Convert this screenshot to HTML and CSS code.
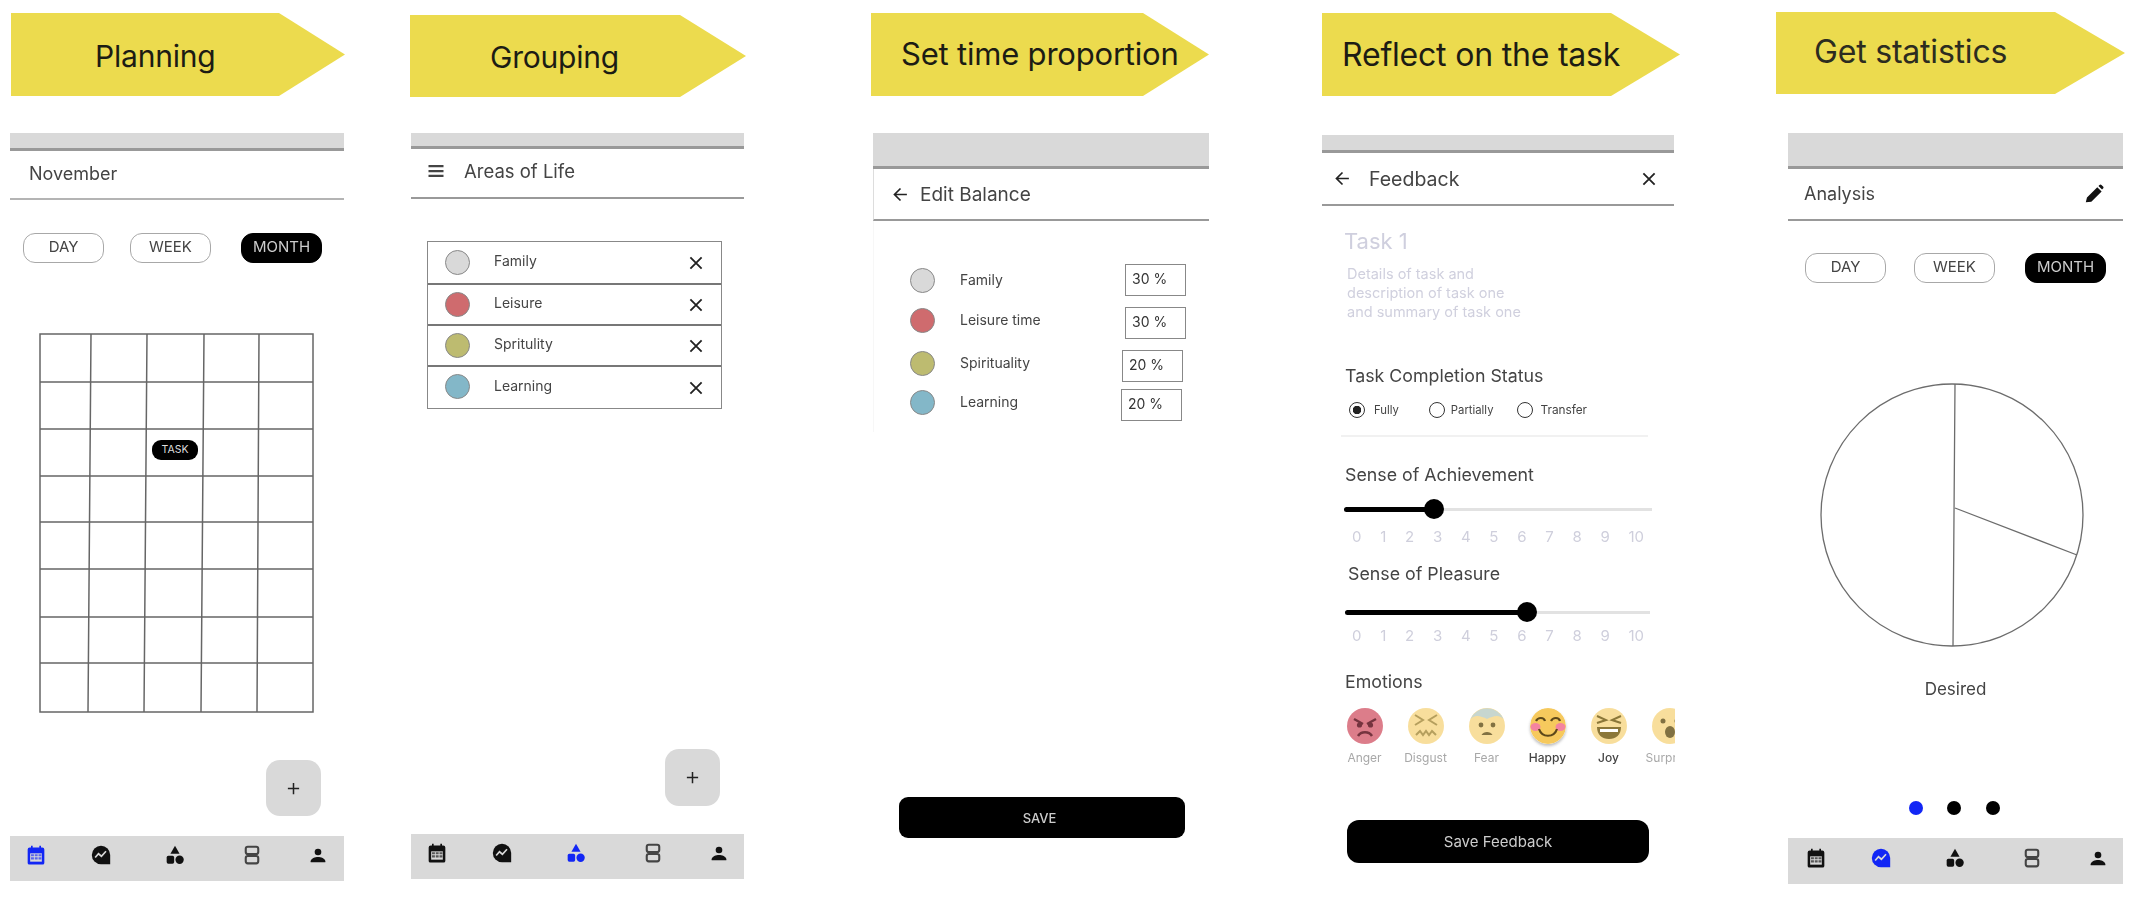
FILE: index.html
```html
<!DOCTYPE html>
<html lang="en">
<head>
<meta charset="utf-8">
<title>Task flow wireframes</title>
<link rel="stylesheet" href="styles.css">
</head>
<body>
<svg class="defs" width="0" height="0" aria-hidden="true">
  <symbol id="i-cal" viewBox="0 0 24 24"><path d="M6 1h2v2h8V1h2v2h1.500A2.500 2.500 0 0 1 22 5.500v16a2 2 0 0 1-2 2H4a2 2 0 0 1-2-2v-16A2.500 2.500 0 0 1 4.500 3H6z"/><path class="cut" d="M5 10h14v10H5z"/><path d="M6 11h3.500v2.500H6zM10.500 11H14v2.500h-3.500zM15 11h3.500v2.500H15zM6 14.800h3.500v2.500H6zM10.500 14.800H14v2.500h-3.500zM15 14.800h3.500v2.500H15z" opacity=".65"/></symbol>
  <symbol id="i-insight" viewBox="0 0 24 24"><path d="M12 1a11 11 0 1 0 0 22h11V12A11 11 0 0 0 12 1z"/><path class="zig" d="M5 15l4-4.500 3.500 3 5.500-6"/></symbol>
  <symbol id="i-shapes" viewBox="0 0 24 24"><path d="M12 1l5.500 9.500h-11z"/><rect x="2" y="13" width="9" height="9.500" rx="2"/><circle cx="17.500" cy="17.700" r="5"/></symbol>
  <symbol id="i-agenda" viewBox="0 0 24 24"><rect class="ring" x="4.500" y="2" width="15" height="8.800" rx="2.500"/><rect class="ring" x="4.500" y="13.200" width="15" height="8.800" rx="2.500"/></symbol>
  <symbol id="i-person" viewBox="-3 -3 30 30"><circle cx="12" cy="7.500" r="5"/><path d="M1 21.500c0-4.500 7-6.500 11-6.500s11 2 11 6.500v1.500H1z"/></symbol>
  <symbol id="i-x" viewBox="0 0 24 24"><path class="line" d="M4.500 4.500l15 15M19.500 4.500l-15 15"/></symbol>
  <symbol id="i-back" viewBox="0 0 24 24"><path class="line" d="M21 12H4M12 3.500L3.500 12l8.500 8.500"/></symbol>
  <symbol id="i-plus" viewBox="0 0 24 24"><path class="line" d="M12 3v18M3 12h18"/></symbol>
  <symbol id="i-menu" viewBox="0 0 24 24"><path d="M2 4h20v3H2zM2 10.500h20v3H2zM2 17h20v3H2z"/></symbol>
  <symbol id="i-pen" viewBox="0 0 24 24"><path d="M1 23l1.500-6L15.500 4l5.500 5.500L8 22.500zM17 2.500l1.300-1.300a1.800 1.800 0 0 1 2.500 0l2 2a1.800 1.800 0 0 1 0 2.500L21.500 7z"/></symbol>
</svg>

<main class="board">

  <section class="col col-1">
    <h2 class="step step-1">Planning</h2>
    <div class="screen screen-1">
      <div class="status"></div>
      <header class="bar"><span class="bar-title">November</span></header>
      <div class="seg seg-1">
        <span class="pill">DAY</span><span class="pill">WEEK</span><span class="pill pill-on">MONTH</span>
      </div>
      <div class="cal">
        <svg class="cal-grid" viewBox="0 0 276 381" width="276" height="381">
          <g class="grid-lines">
            <rect x="1" y="1" width="273" height="378"/>
            <path d="M1 49H274M1 96H274M1 143H274M1 189H274M1 236H274M1 284H274M1 330H274"/>
            <path d="M52 1L49 379M108 1L105 379M165 1L162 379M220 1L218 379"/>
          </g>
        </svg>
        <span class="task-chip">TASK</span>
      </div>
      <button class="fab fab-1"><svg class="ico-plus"><use href="#i-plus"/></svg></button>
      <nav class="tabs">
        <svg class="tab tab-on"><use href="#i-cal"/></svg>
        <svg class="tab"><use href="#i-insight"/></svg>
        <svg class="tab"><use href="#i-shapes"/></svg>
        <svg class="tab"><use href="#i-agenda"/></svg>
        <svg class="tab"><use href="#i-person"/></svg>
      </nav>
    </div>
  </section>

  <section class="col col-2">
    <h2 class="step step-2">Grouping</h2>
    <div class="screen screen-2">
      <div class="status"></div>
      <header class="bar"><svg class="ico-menu"><use href="#i-menu"/></svg><span class="bar-title">Areas of Life</span></header>
      <ul class="areas">
        <li class="area"><span class="swatch sw-grey"></span><span class="area-name">Family</span><svg class="ico-x"><use href="#i-x"/></svg></li>
        <li class="area"><span class="swatch sw-red"></span><span class="area-name">Leisure</span><svg class="ico-x"><use href="#i-x"/></svg></li>
        <li class="area"><span class="swatch sw-olive"></span><span class="area-name">Spritulity</span><svg class="ico-x"><use href="#i-x"/></svg></li>
        <li class="area"><span class="swatch sw-blue"></span><span class="area-name">Learning</span><svg class="ico-x"><use href="#i-x"/></svg></li>
      </ul>
      <button class="fab fab-2"><svg class="ico-plus"><use href="#i-plus"/></svg></button>
      <nav class="tabs">
        <svg class="tab"><use href="#i-cal"/></svg>
        <svg class="tab"><use href="#i-insight"/></svg>
        <svg class="tab tab-on"><use href="#i-shapes"/></svg>
        <svg class="tab"><use href="#i-agenda"/></svg>
        <svg class="tab"><use href="#i-person"/></svg>
      </nav>
    </div>
  </section>

  <section class="col col-3">
    <h2 class="step step-3">Set time proportion</h2>
    <div class="screen screen-3">
      <div class="status status-tall"></div>
      <header class="bar bar-3"><svg class="ico-back"><use href="#i-back"/></svg><span class="bar-title">Edit Balance</span></header>
      <div class="balance">
        <div class="bal bal-a"><span class="swatch sw-grey"></span><span class="bal-name">Family</span><span class="pct">30 %</span></div>
        <div class="bal bal-b"><span class="swatch sw-red"></span><span class="bal-name">Leisure time</span><span class="pct">30 %</span></div>
        <div class="bal bal-c"><span class="swatch sw-olive"></span><span class="bal-name">Spirituality</span><span class="pct">20 %</span></div>
        <div class="bal bal-d"><span class="swatch sw-blue"></span><span class="bal-name">Learning</span><span class="pct">20 %</span></div>
      </div>
      <button class="save">SAVE</button>
    </div>
  </section>

  <section class="col col-4">
    <h2 class="step step-4">Reflect on the task</h2>
    <div class="screen screen-4">
      <div class="status"></div>
      <header class="bar bar-4"><svg class="ico-back"><use href="#i-back"/></svg><span class="bar-title">Feedback</span><svg class="ico-x ico-x-end"><use href="#i-x"/></svg></header>
      <div class="feedback">
        <h3 class="task-title">Task 1</h3>
        <p class="task-desc">Details of task and<br>description of task one<br>and summary of task one</p>
        <h4 class="fb-label fb-status">Task Completion Status</h4>
        <div class="radios">
          <span class="radio radio-on"></span><span class="radio-text">Fully</span>
          <span class="radio radio-2"></span><span class="radio-text">Partially</span>
          <span class="radio radio-3"></span><span class="radio-text">Transfer</span>
        </div>
        <div class="divider"></div>
        <h4 class="fb-label fb-ach">Sense of Achievement</h4>
        <div class="slider"><div class="slider-fill" style="width:29.2%"></div></div>
        <div class="scale"><span>0</span><span>1</span><span>2</span><span>3</span><span>4</span><span>5</span><span>6</span><span>7</span><span>8</span><span>9</span><span>10</span></div>
        <h4 class="fb-label fb-ple">Sense of Pleasure</h4>
        <div class="slider slider-2"><div class="slider-fill" style="width:59.7%"></div></div>
        <div class="scale scale-2"><span>0</span><span>1</span><span>2</span><span>3</span><span>4</span><span>5</span><span>6</span><span>7</span><span>8</span><span>9</span><span>10</span></div>
        <h4 class="fb-label fb-emo">Emotions</h4>
        <div class="emotions">
          <div class="emo">
            <svg class="face" viewBox="0 0 36 36"><circle cx="18" cy="18" r="18" fill="#db7684"/><path d="M7 11l9 5M29 11l-9 5" stroke="#6e2a35" stroke-width="2.500" fill="none"/><circle cx="12.500" cy="17" r="2.600" fill="#6e2a35"/><circle cx="23.500" cy="17" r="2.600" fill="#6e2a35"/><path d="M11 28c3-5 11-5 14 0" stroke="#6e2a35" stroke-width="2.500" fill="none"/></svg>
            <span class="emo-name">Anger</span>
          </div>
          <div class="emo">
            <svg class="face" viewBox="0 0 36 36"><circle cx="18" cy="18" r="18" fill="#f8dd97"/><path d="M7 7l8 5-8 5M29 7l-8 5 8 5M8 27l4-4 3 4 3-4 3 4 3-4 4 4" stroke="#b29a55" stroke-width="2" fill="none"/></svg>
            <span class="emo-name">Disgust</span>
          </div>
          <div class="emo">
            <svg class="face" viewBox="0 0 36 36"><circle cx="18" cy="18" r="18" fill="#f8dd97"/><path d="M1.500 11A18 18 0 0 1 34.500 11C30 6 24 8 18 11 12 8 6 6 1.500 11z" fill="#c5d4cd"/><circle cx="12" cy="17" r="2.400" fill="#7b6a38"/><circle cx="24" cy="17" r="2.400" fill="#7b6a38"/><path d="M12.500 27c2-4 9-4 11 0z" fill="#7b6a38"/></svg>
            <span class="emo-name">Fear</span>
          </div>
          <div class="emo emo-on">
            <svg class="face face-on" viewBox="0 0 36 36"><circle cx="18" cy="18" r="18" fill="#f6c755"/><ellipse cx="5.500" cy="19" rx="5" ry="4" fill="#f47e9b"/><ellipse cx="30.500" cy="19" rx="5" ry="4" fill="#f47e9b"/><path d="M6 13c2-4 8-4 9 0M21 13c2-4 8-4 9 0M9 21c3 9 15 9 18 0" stroke="#553f0e" stroke-width="2.200" fill="none"/></svg>
            <span class="emo-name">Happy</span>
          </div>
          <div class="emo emo-on">
            <svg class="face face-soft" viewBox="0 0 36 36"><circle cx="18" cy="18" r="18" fill="#f8dd97"/><path d="M6 8l9 4-9 3M30 8l-9 4 9 3" stroke="#85702f" stroke-width="2" fill="none"/><path d="M6 19h24c0 8-5 12-12 12S6 27 6 19z" fill="#85702f"/><path d="M9 21h18v3H9z" fill="#fff"/></svg>
            <span class="emo-name">Joy</span>
          </div>
          <div class="emo">
            <svg class="face" viewBox="0 0 36 36"><circle cx="18" cy="18" r="18" fill="#f8dd97"/><circle cx="11" cy="13" r="2.500" fill="#7b6a38"/><circle cx="25" cy="13" r="2.500" fill="#7b6a38"/><ellipse cx="18" cy="24" rx="5" ry="6" fill="#7b6a38"/></svg>
            <span class="emo-name">Surprise</span>
          </div>
        </div>
        <button class="save save-fb">Save Feedback</button>
      </div>
    </div>
  </section>

  <section class="col col-5">
    <h2 class="step step-5">Get statistics</h2>
    <div class="screen screen-5">
      <div class="status status-tall"></div>
      <header class="bar bar-5"><span class="bar-title">Analysis</span><svg class="ico-pen"><use href="#i-pen"/></svg></header>
      <div class="seg seg-5">
        <span class="pill">DAY</span><span class="pill">WEEK</span><span class="pill pill-on">MONTH</span>
      </div>
      <svg class="pie" viewBox="0 0 266 266" width="266" height="266">
        <g class="pie-lines">
          <circle cx="133" cy="133" r="131"/>
          <path d="M136 2L134 264M136 126L258 173"/>
        </g>
      </svg>
      <p class="pie-label">Desired</p>
      <div class="dots"><span class="dot dot-on"></span><span class="dot"></span><span class="dot"></span></div>
      <nav class="tabs tabs-5">
        <svg class="tab"><use href="#i-cal"/></svg>
        <svg class="tab tab-on"><use href="#i-insight"/></svg>
        <svg class="tab"><use href="#i-shapes"/></svg>
        <svg class="tab"><use href="#i-agenda"/></svg>
        <svg class="tab"><use href="#i-person"/></svg>
      </nav>
    </div>
  </section>

</main>
</body>
</html>
```
FILE: styles.css
```css
* { box-sizing: border-box; }
html, body { margin: 0; padding: 0; background: #fff; }
body { font-family: Inter, "Liberation Sans", sans-serif; color: #444; overflow: hidden; }
.defs { position: absolute; }
h2, h3, h4, p, ul { margin: 0; padding: 0; font-weight: 400; }
ul { list-style: none; }
button { font-family: inherit; border: 0; padding: 0; }

.board { display: flex; width: 2156px; height: 904px; align-items: flex-start; filter: blur(.7px); }
.col { flex: none; display: flex; flex-direction: column; }
.col-1 { margin-left: 11px; width: 334px; }
.col-2 { margin-left: 65px; width: 336px; }
.col-3 { margin-left: 125px; width: 338px; }
.col-4 { margin-left: 113px; width: 358px; }
.col-5 { margin-left: 96px; width: 349px; }

/* Step arrows */
.step {
  --tip: 66px;
  height: 83px;
  margin-top: 13px;
  display: flex;
  align-items: center;
  background: #ecdb4e;
  color: #1c1c14;
  font-size: 30px;
  letter-spacing: -.2px;
  clip-path: polygon(0 0, calc(100% - var(--tip)) 0, 100% 50%, calc(100% - var(--tip)) 100%, 0 100%);
}
.step-1 { padding: 3px 0 0 84px; }
.step-2 { margin-top: 15px; height: 82px; padding: 1px 0 0 80px; }
.step-3 { padding: 0 0 3px 30px; font-size: 31px; }
.step-4 { padding: 0 0 1px 20px; font-size: 32px; --tip: 69px; }
.step-5 { margin-top: 12px; height: 82px; padding: 0 0 3px 38px; font-size: 32px; --tip: 70px; color: #2c2c20; }

/* Phone screens */
.screen { position: relative; display: flex; flex-direction: column; }
.screen-1 { margin: 37px 0 0 -1px; width: 334px; height: 748px; }
.screen-2 { margin: 36px 0 0 1px; width: 333px; height: 746px; }
.screen-3 { margin: 37px 0 0 2px; width: 336px; }
.screen-4 { margin: 39px 0 0 0; width: 352px; }
.screen-5 { margin: 39px 0 0 12px; width: 335px; height: 751px; }

.status { height: 18px; background: #d9d9d9; border-bottom: 3px solid #999; }
.screen-2 .status { height: 16px; }
.status-tall { height: 36px; }

.bar { display: flex; align-items: center; height: 49px; border-bottom: 2px solid #b4b4b4; }
.bar-title { font-size: 18px; color: #444; }
.screen-1 .bar { padding: 0 0 2px 19px; }
.screen-2 .bar { height: 50px; padding: 0 0 4px 16px; border-bottom-color: #999; }
.screen-2 .bar-title { font-size: 18.500px; }
.bar-3 { height: 52px; padding-left: 18px; border-left: 1px solid #ddd; border-bottom-color: #999; }
.bar-3 .bar-title { font-size: 19px; }
.bar-4 { height: 53px; padding-left: 12px; border-bottom-color: #999; }
.bar-4 .bar-title { margin-left: 7px; font-size: 19.500px; }
.bar-5 { height: 52px; padding: 0 19px 2px 16px; justify-content: space-between; border-bottom-color: #999; }

.ico-menu { width: 18px; height: 18px; margin-right: 19px; fill: #444; }
.ico-back { width: 17px; height: 17px; margin-right: 11px; fill: none; }
.ico-x { width: 18px; height: 18px; margin-left: auto; }
.ico-x-end { margin-right: 16px; }
.ico-pen { width: 19px; height: 19px; fill: #111; }
.ico-plus { width: 15px; height: 15px; }
.line { fill: none; stroke: #222; stroke-width: 2.400; }

/* Day / week / month */
.seg { display: flex; }
.seg-1 { margin: 33px 0 0 13px; }
.seg-5 { margin: 32px 0 0 17px; }
.pill {
  flex: none;
  width: 81px;
  height: 30px;
  margin-right: 26px;
  padding-top: 3px;
  display: flex;
  align-items: flex-start;
  justify-content: center;
  border: 1.500px solid #a8a8a8;
  border-radius: 12px;
  font-size: 15px;
  line-height: 20px;
  color: #444;
}
.seg-5 .pill { margin-right: 28px; }
.pill-on { margin-left: 4px; background: #000; border-color: #000; color: #ccc; }
.seg-5 .pill-on { margin-left: 2px; }

/* Calendar */
.cal { position: relative; width: 276px; height: 381px; margin: 70px 0 0 29px; }
.cal-grid { display: block; }
.grid-lines { fill: none; stroke: #666; stroke-width: 1.500; }
.task-chip {
  position: absolute;
  left: 113px;
  top: 107px;
  width: 46px;
  height: 20px;
  border-radius: 9px;
  background: #000;
  color: #ddd;
  font-size: 10.500px;
  line-height: 20px;
  text-align: center;
}

/* Floating add */
.fab {
  position: absolute;
  width: 55px;
  height: 56px;
  display: flex;
  align-items: center;
  justify-content: center;
  border-radius: 14px;
  background: #d9d9d9;
}
.fab-1 { right: 23px; bottom: 65px; }
.fab-2 { right: 24px; bottom: 73px; height: 57px; }

/* Tab bar */
.tabs {
  margin-top: auto;
  height: 45px;
  display: grid;
  grid-template-columns: 65px 74px 77px 66px 1fr;
  align-items: center;
  padding: 0 0 7px 16px;
  background: #d9d9d9;
}
.tabs-5 { height: 46px; padding-left: 18px; }
.tab { width: 20px; height: 20px; fill: #111; }
.tab-on { fill: #1226f5; }
.cut { fill: #d9d9d9; }
.zig { fill: none; stroke: #d9d9d9; stroke-width: 2; }
.ring { fill: none; stroke: #444; stroke-width: 2.500; }
.tab-on .cut { fill: #6a78f0; }

/* Area list */
.areas { width: 295px; margin: 42px 0 0 16px; border: 1.500px solid #888; }
.area { display: flex; align-items: center; height: 41px; padding: 0 16px 0 17px; border-bottom: 2px solid #777; }
.area:first-child { height: 43px; }
.area:last-child { border-bottom: 0; }
.area:last-child .swatch { margin-top: -3px; }
.swatch { flex: none; width: 25px; height: 25px; border-radius: 50%; border: 1.500px solid #888; }
.sw-grey { background: #d9d9d9; }
.sw-red { background: #cf6b6e; }
.sw-olive { background: #bdbb70; }
.sw-blue { background: #83b7c8; }
.area-name { margin: -5px 0 0 24px; font-size: 14px; color: #444; }

/* Balance */
.balance { padding: 43px 23px 0 36px; border-left: 1px solid #f7f7f7; }
.bal { display: flex; align-items: center; height: 32px; margin-bottom: 11px; }
.bal-c { margin-bottom: 7px; }
.bal-name { margin: -2px 0 0 25px; font-size: 14px; color: #444; }
.bal-b .swatch, .bal-c .swatch, .bal-d .swatch { margin-top: -5px; }
.bal-b .bal-name, .bal-c .bal-name, .bal-d .bal-name { margin-top: -7px; }
.pct {
  margin-left: auto;
  width: 61px;
  height: 32px;
  padding-left: 6px;
  border: 1.500px solid #888;
  font-size: 14px;
  line-height: 28px;
  color: #333;
}
.bal-c .pct { margin-right: 3px; }
.bal-d .pct { margin-right: 4px; }

.save {
  display: block;
  width: 286px;
  height: 41px;
  margin: 365px 0 0 26px;
  padding-right: 5px;
  border-radius: 9px;
  background: #000;
  color: #ccc;
  font-size: 13px;
  font-weight: 500;
}

/* Feedback */
.feedback { padding-left: 23px; }
.task-title { margin: 22px 0 0 -1px; font-size: 22px; line-height: 26px; color: #cfcfde; }
.task-desc { margin: 10px 0 0 2px; font-size: 14.500px; line-height: 19px; color: #d0d0de; }
.fb-label { font-size: 17.800px; line-height: 20px; color: #444; }
.fb-status { margin-top: 45px; }
.radios { display: flex; align-items: center; height: 14px; margin: 17px 0 0 4px; }
.radio { flex: none; width: 16px; height: 16px; border: 1.500px solid #333; border-radius: 50%; background: #fff; }
.radio-on { background: radial-gradient(circle, #222 0 4px, #fff 4.500px); }
.radio-2 { margin-left: 30px; }
.radio-3 { margin-left: 23px; }
.radio-text { margin-left: 6px; font-size: 11.300px; color: #444; }
.radio-on + .radio-text { margin-left: 9px; }
.radio-3 + .radio-text { margin-left: 8px; font-size: 11.800px; }
.divider { width: 307px; height: 2px; margin: 18px 0 0 -4px; background: #f1f1f1; }
.fb-ach { margin-top: 28px; }
.fb-ple { margin: 19px 0 0 3px; }
.fb-emo { margin-top: 28px; }

.slider { display: flex; align-items: center; width: 308px; height: 20px; margin: 14px 0 0 -1px; background: linear-gradient(#e2e2e2, #e2e2e2) center / 100% 3px no-repeat; }
.slider-2 { width: 305px; margin: 18px 0 0 0; }
.slider-fill { position: relative; height: 5px; border-radius: 3px; background: #000; }
.slider-fill::after {
  content: "";
  position: absolute;
  right: -10px;
  top: -8px;
  width: 20px;
  height: 20px;
  border-radius: 50%;
  background: #000;
}
.scale { display: flex; justify-content: space-between; width: 292px; margin: 10px 0 0 7px; font-size: 15px; line-height: 16px; color: #cfcfdc; }
.scale-2 { margin-top: 6px; }

.emotions { display: flex; width: 341px; margin: 16px 0 0 -11px; overflow: hidden; }
.emo { flex: none; width: 61px; display: flex; flex-direction: column; align-items: center; }
.face { display: block; width: 36px; height: 36px; opacity: .95; }
.face-on { box-shadow: 0 2px 3px #bbb; border-radius: 50%; }
.emo-name { margin-top: 7px; font-size: 12px; line-height: 14px; color: #a8a8a8; white-space: nowrap; }
.emo-on .emo-name { color: #444; font-weight: 500; }

.save-fb { width: 302px; height: 43px; margin: 55px 0 0 2px; padding-right: 0; border-radius: 12px; font-size: 15px; font-weight: 400; }

/* Statistics */
.pie { display: block; margin: 99px 0 0 31px; }
.pie-lines { fill: none; stroke: #6c6c6c; stroke-width: 1.300; }
.pie-label { margin-top: 29px; font-size: 17px; line-height: 24px; text-align: center; color: #444; }
.dots { display: flex; justify-content: center; gap: 24px; margin: 100px 0 0 -2px; }
.dot { width: 14px; height: 14px; border-radius: 50%; background: #000; }
.dot:last-child { margin-left: 1px; }
.dot-on { background: #1226f5; }
```
